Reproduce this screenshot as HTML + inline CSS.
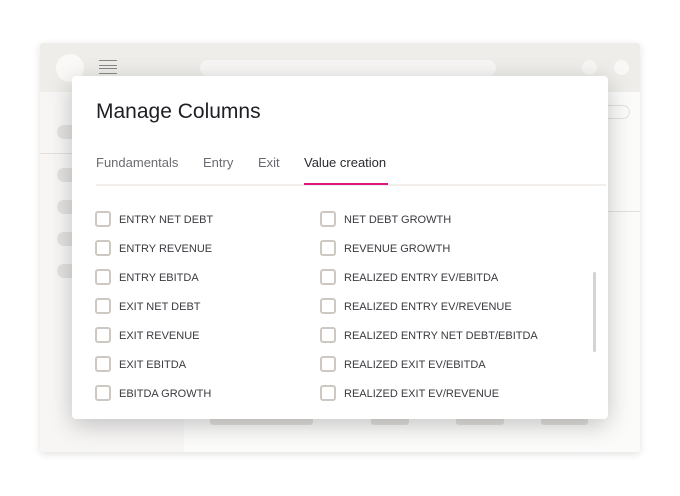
<!DOCTYPE html>
<html><head><style>
*{margin:0;padding:0;box-sizing:border-box}
body{width:680px;height:496px;background:#fff;position:relative;overflow:hidden;font-family:"Liberation Sans",sans-serif}
.win{position:absolute;left:40px;top:43px;width:600px;height:409px;background:#f7f6f5;border-radius:3px;box-shadow:0 2px 8px rgba(0,0,0,.12);overflow:hidden}
.hdr{position:absolute;left:0;top:0;width:600px;height:49px;background:#efedea}
.a{position:absolute}
.pill{position:absolute;background:#e4e2df;border-radius:7px}
.modal{position:absolute;left:72px;top:76px;width:536px;height:343px;background:#fff;border-radius:4px;box-shadow:0 6px 24px rgba(0,0,0,.22)}
.t{position:absolute;left:24px;top:24px;font-size:21px;color:#1e1e24}
.tab{position:absolute;top:79px;font-size:13px;color:#6b6b72}
.row{position:absolute;font-size:11px;color:#3a3a40;height:16px;line-height:16px}
.row i{position:absolute;left:0;top:0;width:16px;height:16px;border:2px solid #cdc8c2;border-radius:3px}
.row span{position:absolute;left:24px;top:1px;white-space:nowrap}
</style></head><body>
<div class="win">
 <div class="hdr"></div>
 <div class="a" style="left:16px;top:11px;width:28px;height:28px;border-radius:50%;background:#faf9f8"></div>
 <div class="a" style="left:59px;top:17px;width:18px;height:14px;border-top:1.5px solid #888;border-bottom:1.5px solid #888"></div>
 <div class="a" style="left:59px;top:22px;width:18px;height:4px;border-top:1.5px solid #888;border-bottom:1.5px solid #888"></div>
 <div class="a" style="left:160px;top:17px;width:296px;height:16px;border-radius:8px;background:#f7f6f5"></div>
 <div class="a" style="left:542px;top:17px;width:15px;height:15px;border-radius:50%;background:#f7f6f5"></div>
 <div class="a" style="left:574px;top:17px;width:15px;height:15px;border-radius:50%;background:#f9f8f7"></div>
 <div class="a" style="left:144px;top:49px;width:456px;height:360px;background:#fbfbfa"></div>
 <div class="a" style="left:0;top:110px;width:144px;height:1px;background:#e3e0dc"></div>
 <div class="a" style="left:144px;top:168px;width:456px;height:1px;background:#e3e0dc"></div>
 <div class="a" style="left:540px;top:62px;width:50px;height:14px;border:1px solid #e3e0dc;border-radius:7px"></div>
 <div class="pill" style="left:17px;top:82px;width:40px;height:14px"></div>
 <div class="pill" style="left:17px;top:125px;width:40px;height:14px"></div>
 <div class="pill" style="left:17px;top:157px;width:40px;height:14px"></div>
 <div class="pill" style="left:17px;top:189px;width:40px;height:14px"></div>
 <div class="pill" style="left:17px;top:221px;width:40px;height:14px"></div>
 <div class="pill" style="left:170px;top:370px;width:103px;height:12px;border-radius:3px"></div>
 <div class="pill" style="left:331px;top:370px;width:38px;height:12px;border-radius:3px"></div>
 <div class="pill" style="left:416px;top:370px;width:48px;height:12px;border-radius:3px"></div>
 <div class="pill" style="left:501px;top:370px;width:47px;height:12px;border-radius:3px"></div>
</div>
<div class="modal">
 <div class="t">Manage Columns</div>
 <div class="tab" style="left:24px">Fundamentals</div>
 <div class="tab" style="left:131px">Entry</div>
 <div class="tab" style="left:186px">Exit</div>
 <div class="tab" style="left:232px;color:#2a2a30">Value creation</div>
 <div class="a" style="left:24px;top:108px;width:510px;height:2px;background:#f1eeeb"></div>
 <div class="a" style="left:232px;top:107px;width:84px;height:2px;background:#e0157f"></div>
 <div class="a" style="left:521px;top:196px;width:3px;height:80px;background:#d7d3cf;border-radius:2px"></div>
 <div class="row" style="left:23px;top:135px"><i></i><span>ENTRY NET DEBT</span></div>
 <div class="row" style="left:23px;top:164px"><i></i><span>ENTRY REVENUE</span></div>
 <div class="row" style="left:23px;top:193px"><i></i><span>ENTRY EBITDA</span></div>
 <div class="row" style="left:23px;top:222px"><i></i><span>EXIT NET DEBT</span></div>
 <div class="row" style="left:23px;top:251px"><i></i><span>EXIT REVENUE</span></div>
 <div class="row" style="left:23px;top:280px"><i></i><span>EXIT EBITDA</span></div>
 <div class="row" style="left:23px;top:309px"><i></i><span>EBITDA GROWTH</span></div>
 <div class="row" style="left:248px;top:135px"><i></i><span>NET DEBT GROWTH</span></div>
 <div class="row" style="left:248px;top:164px"><i></i><span>REVENUE GROWTH</span></div>
 <div class="row" style="left:248px;top:193px"><i></i><span>REALIZED ENTRY EV/EBITDA</span></div>
 <div class="row" style="left:248px;top:222px"><i></i><span>REALIZED ENTRY EV/REVENUE</span></div>
 <div class="row" style="left:248px;top:251px"><i></i><span>REALIZED ENTRY NET DEBT/EBITDA</span></div>
 <div class="row" style="left:248px;top:280px"><i></i><span>REALIZED EXIT EV/EBITDA</span></div>
 <div class="row" style="left:248px;top:309px"><i></i><span>REALIZED EXIT EV/REVENUE</span></div>
</div>
</body></html>
